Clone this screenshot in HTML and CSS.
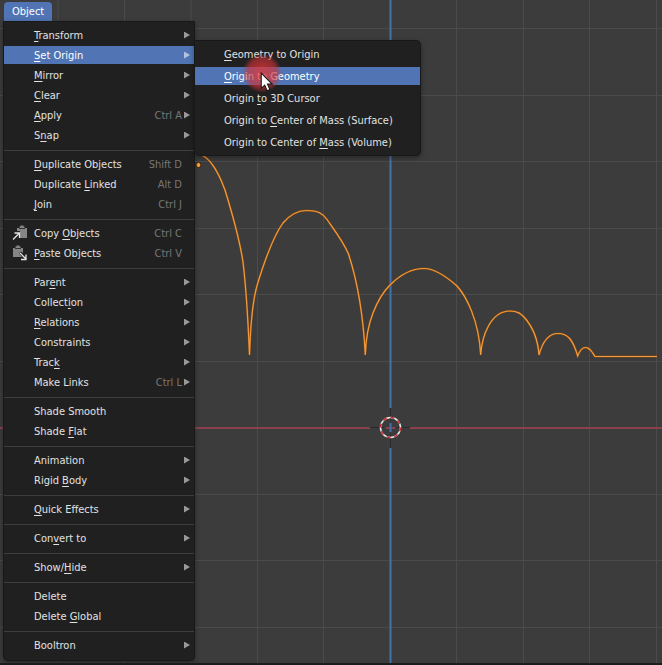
FILE: index.html
```html
<!DOCTYPE html>
<html lang="en">
<head>
<meta charset="utf-8">
<meta name="viewport" content="width=device-width, initial-scale=1">
<title>Object menu</title>
<link rel="stylesheet" href="styles.css">
</head>
<body>
<svg class="viewport" viewBox="0 0 662 663" preserveAspectRatio="xMinYMin slice" aria-hidden="true">
  <defs>
    <path id="bounce" d="M194 154C208 152 218 171 225 190C233 216 240 242 243 262C247 295 248 320 249.500 355C250.500 325 252 302 257.500 284C263 266 272 238 283 223C291 213.500 299 210.500 306.500 210.500C318 210.500 322 213 327 219.500C335 231 343 241 348.500 254C357 280 363 310 365.300 355C366 335 369 323 373 313C378 300 384 291 390 285C401 274 412 268.500 424 268.500C436 268.500 448 278 457 286C466 296 479 320 480.700 355C482 335 491 311 510 311C518 311 521 314 524 317C533 327 538 340 539 355C543 340 549 333.500 558 333.500C568 333.500 573 340 577.700 356C580 350 582 347.500 585.500 347.500C590 347.500 592 352 595 356.500H657"/>
  </defs>
  <path class="grid" d="M58 0V665M124.500 0V665M191 0V665M257.500 0V665M323.500 0V665M456.500 0V665M523.500 0V665M589.500 0V665M656.500 0V665M0 28.500H662M0 95.500H662M0 161.500H662M0 228.500H662M0 294.500H662M0 361.500H662M0 494.500H662M0 560.500H662M0 627.500H662"/>
  <path class="axis-z" d="M390.500 0V408M390.500 448V665"/>
  <path class="axis-x" d="M0 428H370M410 428H662"/>
  <path class="cross" d="M370 427.500H384M397 427.500H410M390.500 408V421M390.500 434V448"/>
  <path class="axis-x" d="M386 428H395"/>
  <path class="axis-z" d="M390.500 423V432"/>
  <circle class="ring" cx="390.500" cy="427.500" r="10"/>
  <circle class="ring-dash" cx="390.500" cy="427.500" r="10" pathLength="16"/>
  <use class="curve-edge" href="#bounce"/>
  <use class="curve" href="#bounce"/>
  <circle class="origin" cx="198.500" cy="165" r="2.500"/>
</svg>

<nav class="menubar" aria-label="Viewport">
  <button class="menu-title" type="button">Object</button>
  <ul class="menu">
    <li><button class="item more" type="button"><span class="label"><u>T</u>ransform</span></button></li>
    <li class="open">
      <button class="item more active" type="button"><span class="label"><u>S</u>et Origin</span></button>
      <ul class="menu submenu">
        <li><button class="item" type="button"><span class="label"><u>G</u>eometry to Origin</span></button></li>
        <li class="pointed">
          <button class="item active" type="button"><span class="label"><u>O</u>rigin to Geometry</span></button>
          <span class="click"></span>
          <svg class="pointer" viewBox="0 0 12 19" aria-hidden="true"><path d="M1 1V15.500L4.300 12.400L6.600 17.800L9.200 16.700L6.900 11.500H11.300Z"/></svg>
        </li>
        <li><button class="item" type="button"><span class="label">Origin <u>t</u>o 3D Cursor</span></button></li>
        <li><button class="item" type="button"><span class="label">Origin to <u>C</u>enter of Mass (Surface)</span></button></li>
        <li><button class="item" type="button"><span class="label">Origin to Center of <u>M</u>ass (Volume)</span></button></li>
      </ul>
    </li>
    <li><button class="item more" type="button"><span class="label"><u>M</u>irror</span></button></li>
    <li><button class="item more" type="button"><span class="label"><u>C</u>lear</span></button></li>
    <li><button class="item more" type="button"><span class="label"><u>A</u>pply</span><kbd>Ctrl A</kbd></button></li>
    <li><button class="item more" type="button"><span class="label">S<u>n</u>ap</span></button></li>
    <li class="rule"></li>
    <li><button class="item" type="button"><span class="label"><u>D</u>uplicate Objects</span><kbd>Shift D</kbd></button></li>
    <li><button class="item" type="button"><span class="label">Duplicate <u>L</u>inked</span><kbd>Alt D</kbd></button></li>
    <li><button class="item" type="button"><span class="label"><u>J</u>oin</span><kbd>Ctrl J</kbd></button></li>
    <li class="rule"></li>
    <li><button class="item" type="button">
      <svg class="icon" viewBox="0 0 16 16" aria-hidden="true"><path class="board" d="M5 3H7.500V1.500H8.500V.5H11.500V1.500H12.500V3H15V13H8V6H5Z"/><path class="clip" d="M7 3.500H13"/><path class="arrow" d="M1 14.500L7 8.500M2.500 8H7.500V13"/></svg>
      <span class="label">Copy <u>O</u>bjects</span><kbd>Ctrl C</kbd></button></li>
    <li><button class="item" type="button">
      <svg class="icon" viewBox="0 0 16 16" aria-hidden="true"><path class="board" d="M1 3H3.500V1.500H4.500V.5H7.500V1.500H8.500V3H11V8L9 6.500L7 8.500L10 12H1Z"/><path class="clip" d="M3 3.500H9"/><path class="arrow" d="M8 8L14 14M14 9.500V14.500H9"/></svg>
      <span class="label"><u>P</u>aste Objects</span><kbd>Ctrl V</kbd></button></li>
    <li class="rule"></li>
    <li><button class="item more" type="button"><span class="label">Par<u>e</u>nt</span></button></li>
    <li><button class="item more" type="button"><span class="label">Collect<u>i</u>on</span></button></li>
    <li><button class="item more" type="button"><span class="label"><u>R</u>elations</span></button></li>
    <li><button class="item more" type="button"><span class="label">Constraints</span></button></li>
    <li><button class="item more" type="button"><span class="label">Trac<u>k</u></span></button></li>
    <li><button class="item more" type="button"><span class="label">Make Links</span><kbd>Ctrl L</kbd></button></li>
    <li class="rule"></li>
    <li><button class="item" type="button"><span class="label">Shade Smooth</span></button></li>
    <li><button class="item" type="button"><span class="label">Shade <u>F</u>lat</span></button></li>
    <li class="rule"></li>
    <li><button class="item more" type="button"><span class="label">Animation</span></button></li>
    <li><button class="item more" type="button"><span class="label">Rigid <u>B</u>ody</span></button></li>
    <li class="rule"></li>
    <li><button class="item more" type="button"><span class="label"><u>Q</u>uick Effects</span></button></li>
    <li class="rule"></li>
    <li><button class="item more" type="button"><span class="label">Con<u>v</u>ert to</span></button></li>
    <li class="rule"></li>
    <li><button class="item more" type="button"><span class="label">Show/<u>H</u>ide</span></button></li>
    <li class="rule"></li>
    <li><button class="item" type="button"><span class="label">Delete</span></button></li>
    <li><button class="item" type="button"><span class="label">Delete <u>G</u>lobal</span></button></li>
    <li class="rule"></li>
    <li><button class="item more" type="button"><span class="label">Booltron</span></button></li>
  </ul>
</nav>
</body>
</html>
```
FILE: styles.css
```css
* { box-sizing: border-box; }

body {
  margin: 0;
  min-height: 100vh;
  position: relative;
  background: #3c3c3c;
  border-bottom: 2px solid #1d1d1e;
  color: #e2e2e2;
  font: 11px/16px "DejaVu Sans Condensed", "DejaVu Sans", sans-serif;
}

button, kbd { font: inherit; color: inherit; }

/* Canvas behind the menus */
.viewport {
  position: absolute;
  inset: 0;
  width: 100%;
  height: 100%;
  fill: none;
}
.grid { stroke: #4b4b4b; }
.axis-z { stroke: #4272ac; stroke-width: 2; }
.axis-x { stroke: #8a414d; stroke-width: 2; }
.cross { stroke: #252a30; }
.ring { stroke: #e8e8e8; stroke-width: 1.5; }
.ring-dash { stroke: #c4282c; stroke-width: 1.5; stroke-dasharray: 1 1; }
.curve-edge { stroke: #7d4a16; stroke-width: 2; }
.curve { stroke: #f39a3c; stroke-width: 1.2; }
.origin { fill: #ffa040; stroke: #33200c; }

/* Menus */
.menubar {
  position: relative;
  padding: 2px 4px 3px;
}
.menu-title {
  display: block;
  height: 20px;
  padding: 0 8px;
  border: 0;
  border-radius: 4px 4px 0 0;
  background: #5074b4;
  color: #fff;
}
.menu {
  width: 190px;
  margin: 0;
  padding: 3px 0 5px;
  list-style: none;
  background: #202020;
  border-radius: 0 0 4px 4px;
  box-shadow: 0 0 0 1px #181818, 0 2px 5px 1px rgba(0, 0, 0, .35);
}
.item {
  display: grid;
  grid-template-columns: 22px 1fr auto 6px;
  align-items: center;
  width: 100%;
  height: 20px;
  padding: 0 4px 0 8px;
  border: solid transparent;
  border-width: 1px 0;
  background: transparent padding-box;
  text-align: left;
}
.active { background-color: #5074b4; color: #fff; }
.label, kbd { padding-top: 2px; white-space: nowrap; }
.label { grid-column: 2; }
.label u {
  text-decoration-thickness: 1px;
  text-underline-offset: 2px;
  text-decoration-skip-ink: none;
}
kbd { padding-right: 2px; color: #777; }
.more::after {
  content: "";
  grid-column: 4;
  width: 6px;
  height: 7px;
  background: #999;
  clip-path: polygon(0 0, 100% 50%, 0 100%);
}
.more.active::after { background: #b4c3df; }
.rule {
  height: 9px;
  border: solid transparent;
  border-width: 5px 0 3px;
  background: #3d3d3d padding-box;
}
.icon { grid-column: 1; width: 16px; height: 16px; }
.icon path { fill: none; }
.icon .board { fill: #858585; }
.icon .clip { stroke: #333; }
.icon .arrow { stroke: #e4e4e4; stroke-width: 1.3; }
.icon + .label { grid-row: 1; }

/* Set Origin submenu */
.open, .pointed { position: relative; }
.submenu {
  position: absolute;
  top: -4px;
  left: 191px;
  z-index: 1;
  width: 225px;
  padding: 2px 0;
  border-radius: 0 4px 4px 4px;
}
.submenu .item { height: 22px; padding-left: 7px; border-width: 2px 0; }
.click {
  position: absolute;
  top: -12px;
  left: 47px;
  width: 40px;
  height: 40px;
  border-radius: 50%;
  background: radial-gradient(circle, rgba(224, 54, 54, .75) 20%, rgba(205, 50, 55, .6) 52%, transparent 70%);
}
.pointer {
  position: absolute;
  top: 7px;
  left: 65px;
  width: 13px;
  height: 20px;
}
.pointer path { fill: #fff; stroke: #181818; }
```
